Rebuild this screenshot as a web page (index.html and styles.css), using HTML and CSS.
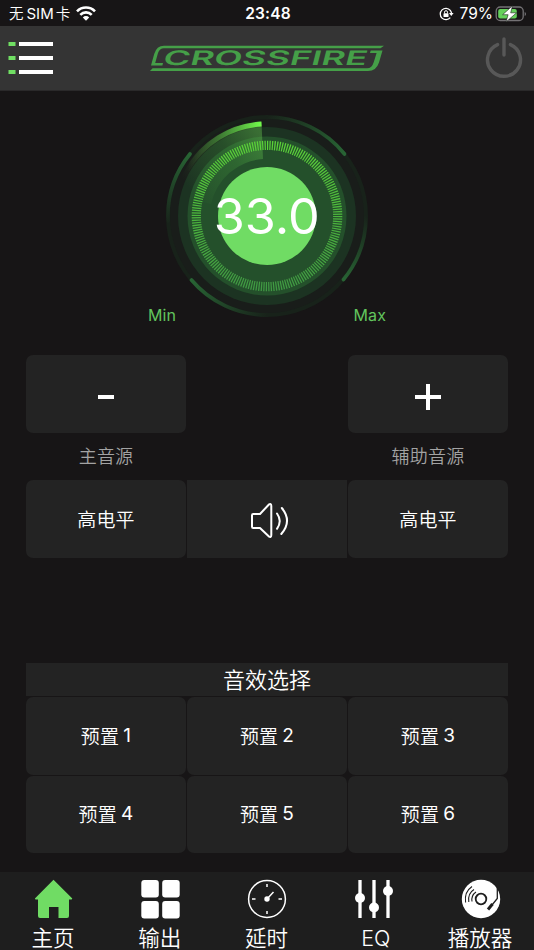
FILE: index.html
```html
<!DOCTYPE html>
<html lang="zh-CN">
<head>
<meta charset="utf-8">
<title>CROSSFIRE</title>
<link rel="stylesheet" href="styles.css">
</head>
<body>
<div class="status">
  <div class="status-left">
    <span class="carrier">无<span class="sim">SIM</span>卡</span>
    <svg class="wifi" width="20" height="15" viewBox="0 0 20 15"><g fill="none" stroke="#fff" stroke-width="2.6"><path d="M1 5.300a12.600 12.600 0 0 1 18 0"/><path d="M4.300 8.800a8 8 0 0 1 11.400 0"/></g><path d="M6.800 11.400a4.500 4.500 0 0 1 6.400 0L10 14.700z" fill="#fff"/></svg>
  </div>
  <span class="clock">23:48</span>
  <div class="status-right">
    <svg class="lock" width="15" height="14" viewBox="0 0 15 14"><path d="M11.300 3.300A5.700 5.700 0 1 0 11.300 10.700M11.300 3.300A5.700 5.700 0 0 1 12.500 6" fill="none" stroke="#fff" stroke-width="1.300"/><path d="M10 6h4.600L12.300 9z" fill="#fff"/><rect x="4.500" y="6.300" width="5" height="3.800" rx=".6" fill="#fff"/><path d="M5.500 6.400V5.200a1.500 1.500 0 0 1 3 0v1.200" fill="none" stroke="#fff"/></svg>
    <span class="percent">79%</span>
    <svg width="32" height="18" viewBox="0 0 32 18"><rect x="1.200" y="2" width="27" height="13.500" rx="4" fill="none" stroke="#747275" stroke-width="1.300"/><rect x="3.200" y="4" width="18.600" height="9.500" rx="2" fill="#65d05b"/><path d="M29.700 7v4c1.800-.7 1.800-3.300 0-4z" fill="#747275"/><path d="M17.500.8 7.600 9.700h5.500L11 16.900 21.600 7.800h-5.900z" fill="#fff" stroke="#1b221b" stroke-width=".6"/></svg>
  </div>
</div>

<header class="header">
  <svg class="menu" width="46" height="34" viewBox="0 0 46 34"><g fill="#70df63"><path d="M.5 1h7v4h-7zM.5 15h7v4h-7zM.5 29h7v4h-7z"/></g><g fill="#fff"><path d="M11 1h34v4H11zM11 15h34v4H11zM11 29h34v4H11z"/></g></svg>
  <svg class="logo" width="236" height="28" viewBox="0 0 236 28">
    <g fill="#459f48">
      <path d="M15 1.700H235L231.500 4.300H15Q10.500 4.300 9 9L6.200 19H14L13.400 21.400H2L5.200 10Q7.500 1.700 15 1.700Z"/>
      <path d="M3.600 24.300H218Q223 24.300 224.800 18L227.600 9H221L221.700 6.600H233.500L230 18.500Q227.300 27 219 27H1Z"/>
    </g>
    <g transform="translate(13 21.400) skewX(-14)"><text class="logo-text" x="0" y="0" textLength="204" lengthAdjust="spacingAndGlyphs">CROSSFIRE</text></g>
  </svg>
  <svg class="power" width="38" height="42" viewBox="0 0 38 42"><path d="M12.600 7.600a16.500 16.500 0 1 0 12.800 0M19 2v16" fill="none" stroke="#585858" stroke-width="3.400" stroke-linecap="round"/></svg>
</header>

<main class="main">
  <section class="dial">
    <svg width="204" height="204" viewBox="-102 -102 204 204">
      <defs>
        <linearGradient id="sweep" x1="-92" y1="-20" x2="-5" y2="-80" gradientUnits="userSpaceOnUse"><stop offset=".15" stop-color="#6bdc50" stop-opacity="0"/><stop offset=".65" stop-color="#5bc94a" stop-opacity=".18"/><stop offset="1" stop-color="#68c850" stop-opacity=".4"/></linearGradient>
        <linearGradient id="rim" x1="-80" y1="0" x2="-5" y2="0" gradientUnits="userSpaceOnUse"><stop offset="0" stop-color="#58a845" stop-opacity="0"/><stop offset=".5" stop-color="#58bd43" stop-opacity=".55"/><stop offset="1" stop-color="#73ff4b"/></linearGradient>
        <linearGradient id="ticks" x1="0" y1="-75" x2="0" y2="75" gradientUnits="userSpaceOnUse"><stop offset="0" stop-color="#5bd338"/><stop offset="1" stop-color="#3f9843"/></linearGradient>
        <linearGradient id="g1" x1="-77" y1="-62" x2="-99" y2="10" gradientUnits="userSpaceOnUse"><stop stop-color="#286434"/><stop offset="1" stop-color="#286434" stop-opacity="0"/></linearGradient>
        <linearGradient id="g2" x1="77" y1="-62" x2="0" y2="-99" gradientUnits="userSpaceOnUse"><stop stop-color="#286434"/><stop offset="1" stop-color="#286434" stop-opacity="0"/></linearGradient>
        <linearGradient id="g3" x1="-76" y1="64" x2="0" y2="99" gradientUnits="userSpaceOnUse"><stop stop-color="#286434"/><stop offset="1" stop-color="#286434" stop-opacity="0"/></linearGradient>
        <linearGradient id="g4" x1="76" y1="64" x2="99" y2="0" gradientUnits="userSpaceOnUse"><stop stop-color="#286434"/><stop offset="1" stop-color="#286434" stop-opacity="0"/></linearGradient>
      </defs>
      <circle r="101" fill="#18221a"/>
      <circle r="97" fill="#191d1a"/>
      <circle r="89" fill="#1c3322"/>
      <circle r="79.500" fill="#24502b"/>
      <g fill="none" stroke-width="3.600" stroke-linecap="round">
        <path d="M-77-62A99 99 0 0 0-99 5" stroke="url(#g1)"/>
        <path d="M77.500-62A99 99 0 0 0 0-99" stroke="url(#g2)"/>
        <path d="M-75.500 64A99 99 0 0 0 0 99" stroke="url(#g3)"/>
        <path d="M76.500 63.500A99 99 0 0 0 99 0" stroke="url(#g4)"/>
      </g>
      <path d="M-5.500-94.300A94.500 94.500 0 0 0-92-20L-56-12A57 57 0 0 1-4-57Z" fill="url(#sweep)"/>
      <path d="M-5.500-92A92.200 92.200 0 0 0-80-46" fill="none" stroke="url(#rim)" stroke-width="5"/>
      <circle r="70.700" fill="none" stroke="url(#ticks)" stroke-width="9.200" pathLength="360" stroke-dasharray="1 1"/>
      <circle r="49" fill="#70dc64"/>
      <text class="value" x="-.3" y="18" text-anchor="middle" textLength="106" lengthAdjust="spacingAndGlyphs">33.0</text>
    </svg>
    <div class="range"><span>Min</span><span>Max</span></div>
  </section>

  <section class="grid volume">
    <button class="tile"><svg width="28" height="28" viewBox="0 0 28 28"><path d="M6 12h16v4H6z" fill="#fff"/></svg></button>
    <span></span>
    <button class="tile"><svg width="28" height="28" viewBox="0 0 28 28"><path d="M1 12h11V1h4v11h11v4H16v11h-4V16H1z" fill="#fff"/></svg></button>
  </section>
  <div class="grid captions"><span>主音源</span><span></span><span>辅助音源</span></div>
  <section class="grid sources">
    <button class="tile">高电平</button>
    <button class="tile square"><svg class="speaker" width="40" height="38" viewBox="0 0 40 38"><g fill="none" stroke="#fff" stroke-width="2" stroke-linecap="round" stroke-linejoin="round"><path d="M2 13.200Q2 12 3.200 12H10L18.700 2.700Q21.300 1 21.300 4V33Q21.300 36 18.700 34.300L10 26H3.200Q2 26 2 24.800Z"/><path d="M27 11.500Q32.500 19 27 26.800M31.800 6Q42.500 19 31.300 32"/></g></svg></button>
    <button class="tile">高电平</button>
  </section>

  <h2 class="effects-title">音效选择</h2>
  <section class="grid presets">
    <button class="tile">预置<span>1</span></button><button class="tile">预置<span>2</span></button><button class="tile">预置<span>3</span></button>
    <button class="tile">预置<span>4</span></button><button class="tile">预置<span>5</span></button><button class="tile">预置<span>6</span></button>
  </section>
</main>

<nav class="tabs">
  <a class="tab"><svg width="40" height="40" viewBox="0 0 40 40"><path d="M20.500.8 39.300 19.400 38.700 20.500H36V37Q36 39 34 39H25.500V28H16V39H7Q5 39 5 37V20.500H2.500L1.900 19.400Z" fill="#70dc64"/></svg><span>主页</span></a>
  <a class="tab"><svg width="40" height="40" viewBox="0 0 40 40"><g fill="#fff"><rect x="1.300" y="1" width="17.500" height="17.500" rx="3"/><rect x="22.200" y="1" width="17.500" height="17.500" rx="3"/><rect x="1.300" y="22" width="17.500" height="17.500" rx="3"/><rect x="22.200" y="22" width="17.500" height="17.500" rx="3"/></g></svg><span>输出</span></a>
  <a class="tab"><svg width="40" height="40" viewBox="0 0 40 40"><g fill="none" stroke="#fff" stroke-width="1.500"><circle cx="20" cy="20" r="18.400"/><path d="M20 5v3M20 32v3M5 20h3.500M31.500 20H35M20 20l6.500-7"/></g><circle cx="20" cy="20" r="2.700" fill="#fff"/></svg><span>延时</span></a>
  <a class="tab"><svg width="40" height="40" viewBox="0 0 40 40"><path d="M6 1v38M20 1v38M34 1v38" stroke="#fff" stroke-width="3.300"/><g fill="#fff"><circle cx="6" cy="19" r="5"/><circle cx="20" cy="28.500" r="5"/><circle cx="34" cy="12" r="5"/></g></svg><span class="latin">EQ</span></a>
  <a class="tab"><svg width="40" height="40" viewBox="0 0 40 40"><circle cx="20" cy="20" r="19.200" fill="#fff"/><g fill="none" stroke="#1e1e1e"><circle cx="20" cy="20" r="5.300" stroke-width="1.800"/><path d="M4.600 23.500Q3 13 11 7.500M7.800 23Q6.500 14.500 13 10.500M11 22.500Q10 16.500 15 13" stroke-width="1.100"/><path d="M36.300 8V19.500L31 26" stroke-width="1.300"/><path d="M31.500 25 27 30.500" stroke-width="3"/></g></svg><span>播放器</span></a>
</nav>
</body>
</html>
```
FILE: styles.css
```css
* { box-sizing: border-box; }
body {
  margin: 0;
  width: 534px;
  height: 950px;
  overflow: hidden;
  display: flex;
  flex-direction: column;
  background: #171516;
  color: #fff;
  font-family: Inter, "Noto Sans CJK SC", sans-serif;
  font-weight: 350;
}
svg { display: block; flex: none; }
button { appearance: none; border: 0; margin: 0; padding: 0; color: inherit; font: inherit; }

.status {
  height: 26px;
  flex: none;
  display: grid;
  grid-template-columns: 1fr auto 1fr;
  align-items: center;
  padding: 1px 7px 0 9px;
  font-size: 15px;
  line-height: 24px;
}
.status-left, .status-right { display: flex; align-items: center; }
.status-left { gap: 6px; }
.carrier { display: flex; font-size: 14.500px; }
.sim { margin: 0 2px 0 3px; font-size: 15px; font-weight: 400; }
.status-right { justify-content: flex-end; gap: 2px; }
.percent { font-size: 15.5px; margin-left: 4px; font-weight: 400; }
.clock { font-size: 15.5px; font-weight: 600; letter-spacing: .2px; }

.header {
  height: 65px;
  flex: none;
  display: flex;
  justify-content: space-between;
  align-items: center;
  padding: 0 11px 0 8px;
  background: #343434;
  border-bottom: 1px solid #2a292a;
}
.logo { margin-left: 57px; margin-right: 63px; }
.logo-text { font-family: Inter, sans-serif; font-size: 20px; font-weight: 600; fill: #459f48; }

.main { flex: 1; padding: 0 26px; }
.dial { display: flex; flex-direction: column; align-items: center; padding-top: 23px; }
.value { font-size: 49px; font-weight: 400; fill: #fff; }
.range {
  width: 238px;
  height: 20px;
  margin-top: -13px;
  display: flex;
  justify-content: space-between;
  color: #62c45d;
  font-size: 16px;
  font-weight: 400;
  line-height: 20px;
  letter-spacing: .1px;
}

.grid { display: grid; grid-template-columns: repeat(3, 160px); gap: 1px; }
.tile {
  height: 77.5px;
  display: flex;
  align-items: center;
  justify-content: center;
  padding-bottom: 1px;
  border-radius: 7px;
  background: #232323;
  font-size: 19px;
  letter-spacing: .2px;
}
.square { border-radius: 0; }
.volume { margin-top: 30px; }
.volume svg { margin-top: 7px; }
.captions {
  height: 47.5px;
  line-height: 48px;
  text-align: center;
  color: #a3a3a3;
  font-size: 18px;
  letter-spacing: .2px;
}
.speaker { margin: 5px 0 0 6px; }
.effects-title {
  margin: 105.5px 0 1.500px;
  height: 32.5px;
  line-height: 34px;
  background: #232323;
  text-align: center;
  font-size: 22px;
  font-weight: inherit;
}
.presets .tile span { margin-left: 4px; font-weight: 400; }

.tabs {
  height: 78px;
  flex: none;
  display: grid;
  grid-template-columns: repeat(5, 1fr);
  background: #1e1e1e;
}
.tab {
  display: flex;
  flex-direction: column;
  align-items: center;
  padding-top: 7px;
  font-size: 21.500px;
  line-height: 32px;
  white-space: nowrap;
}
.tab span { margin: 3px 1px 0 0; }
.tab .latin { padding-left: 5px; }
```
